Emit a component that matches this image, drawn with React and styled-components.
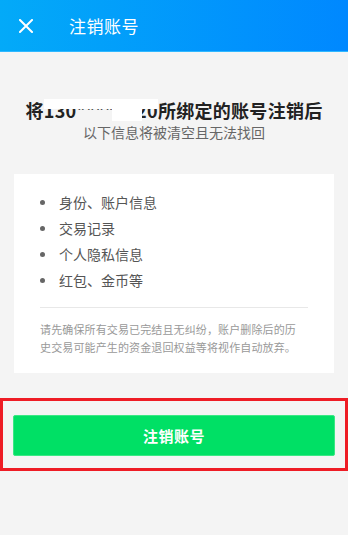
import React from 'react';
import styled, { createGlobalStyle } from 'styled-components';

const GlobalStyle = createGlobalStyle`
    html, body {
        margin: 0;
        padding: 0;
        background: #f4f4f4;
    }

    body {
        font-family: "Noto Sans CJK SC", "Noto Sans", sans-serif;
    }
`;

const Page = styled.div`
    min-height: 100vh;
    background: #f4f4f4;
    display: flex;
    flex-direction: column;
`;

const Header = styled.div`
    height: 51px;
    display: flex;
    align-items: center;
    background: linear-gradient(90deg, #03aaf8 0%, #0088ff 100%);
    border-bottom: 1px solid #2fb8ff;
    color: #fff;
`;

const CloseButton = styled.div`
    width: 52px;
    height: 51px;
    display: flex;
    align-items: center;
    justify-content: center;
    margin-right: 17px;
`;

const HeaderTitle = styled.div`
    font-size: 17px;
    letter-spacing: 0.5px;
`;

const Intro = styled.div`
    margin-top: 46px;
    text-align: center;
`;

const Title = styled.div`
    font-size: 18px;
    line-height: 24px;
    font-weight: 700;
    color: #222;
    letter-spacing: 0.3px;
`;

const Masked = styled.span`
    position: relative;
    font-weight: 700;

    &::before {
        content: "";
        position: absolute;
        left: 0;
        right: 0;
        top: 2px;
        height: 10px;
        background: #fff;
    }

    &::after {
        content: "";
        position: absolute;
        left: 60%;
        width: 30px;
        top: 2px;
        bottom: 2px;
        background: #fff;
    }
`;

const Subtitle = styled.div`
    font-size: 14px;
    line-height: 20px;
    color: #666;
`;

const Card = styled.div`
    margin: 32px 14px 0;
    background: #fff;
    padding: 15px 26px 17px;
`;

const List = styled.ul`
    list-style: none;
    margin: 0;
    padding: 0;
`;

const Item = styled.li`
    display: flex;
    align-items: center;
    height: 26px;
    font-size: 14px;
    color: #555;

    &::before {
        content: "";
        width: 5px;
        height: 5px;
        border-radius: 50%;
        background: #666;
        margin: 0 14px 0 0;
    }
`;

const Divider = styled.div`
    height: 1px;
    background: #e8e8e8;
    margin: 14px 0 12px;
`;

const Note = styled.p`
    margin: 0;
    font-size: 11px;
    line-height: 18px;
    letter-spacing: 0.13px;
    color: #999;
`;

const ActionFrame = styled.div`
    margin-top: 25px;
    border: 3px solid #ee1c25;
    padding: 14px 10px 12px;
`;

const DeleteButton = styled.button`
    width: 100%;
    height: 41px;
    border: 1px solid #3ae884;
    border-radius: 2px;
    background: #00e065;
    color: #fff;
    font-family: "Noto Sans CJK SC", sans-serif;
    font-size: 15px;
    font-weight: 700;
    letter-spacing: 0.5px;
    cursor: pointer;
`;

const items = ['身份、账户信息', '交易记录', '个人隐私信息', '红包、金币等'];

const App = () => (
    <Page>
        <GlobalStyle />
        <Header>
            <CloseButton>
                <svg width="14" height="14" viewBox="0 0 14 14">
                    <path d="M1 1L13 13M13 1L1 13" stroke="#fff" strokeWidth="2" strokeLinecap="square" />
                </svg>
            </CloseButton>
            <HeaderTitle>注销账号</HeaderTitle>
        </Header>

        <Intro>
            <Title>将<Masked>130****1220</Masked>所绑定的账号注销后</Title>
            <Subtitle>以下信息将被清空且无法找回</Subtitle>
        </Intro>

        <Card>
            <List>
                {items.map((item) => (
                    <Item key={item}>{item}</Item>
                ))}
            </List>
            <Divider />
            <Note>
                请先确保所有交易已完结且无纠纷，账户删除后的历<br />
                史交易可能产生的资金退回权益等将视作自动放弃。
            </Note>
        </Card>

        <ActionFrame>
            <DeleteButton>注销账号</DeleteButton>
        </ActionFrame>
    </Page>
);

export default App;
